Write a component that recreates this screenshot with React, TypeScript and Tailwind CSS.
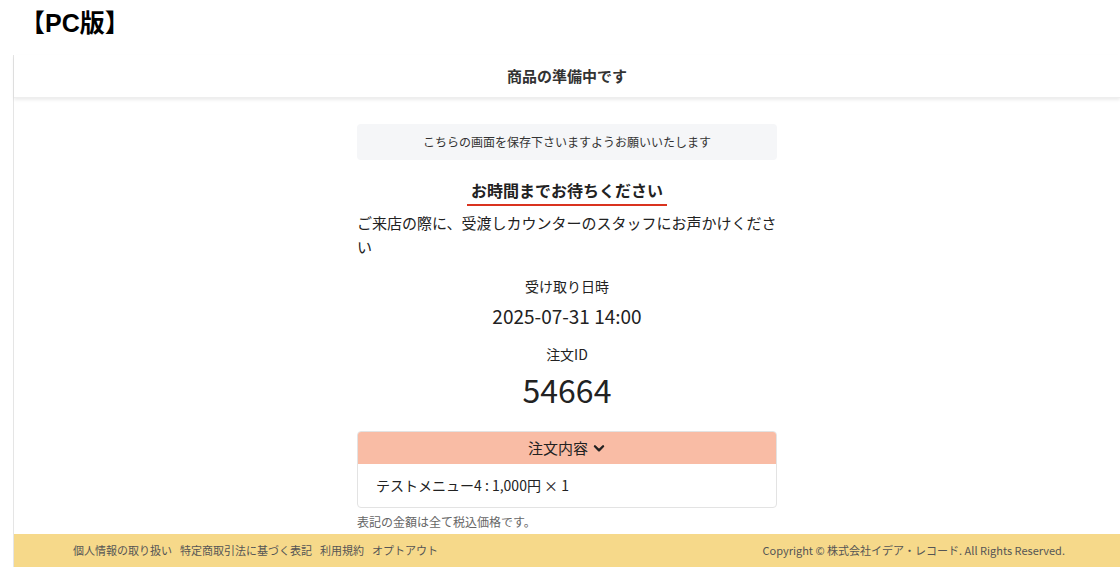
import React from "react";

const FONT = {
  fontFamily: "'Noto Sans CJK JP', 'Noto Sans', sans-serif",
};

export default function App() {
  return (
    <div className="w-[1120px] h-[567px] overflow-hidden bg-white" style={FONT}>
      <div className="h-[55px] pl-[20px] pt-[4px]">
        <h1 className="text-[25px] font-bold text-black leading-[38px]" style={{ fontFamily: "'Liberation Sans', 'Noto Sans CJK JP', sans-serif" }}>
          【PC版】
        </h1>
      </div>

      <div className="ml-[13px] h-[512px] flex flex-col border-l border-[#e5e5e5]">
        {/* ヘッダー */}
        <header className="h-[43px] shrink-0 flex items-center justify-center shadow-[0_2px_3px_rgba(0,0,0,0.08)] border-b border-[#eeeeee]">
          <span className="text-[15px] font-bold text-[#333]">商品の準備中です</span>
        </header>

        {/* コンテンツ */}
        <main className="flex-1 overflow-hidden">
          <div className="w-[420px] mx-auto pt-[26px] flex flex-col items-center text-[#222]">
            <div className="w-full h-[36px] bg-[#f5f6f8] rounded flex items-center justify-center text-[12px] text-[#333]">
              こちらの画面を保存下さいますようお願いいたします
            </div>
            <div className="mt-[18px] text-[16px] font-bold leading-[24px] pb-[2px] px-[4px] border-b-2 border-[#d9331f]">
              お時間までお待ちください
            </div>
            <p className="mt-[5px] text-[15px] leading-[24px]">ご来店の際に、受渡しカウンターのスタッフにお声かけください</p>
            <p className="mt-[16px] text-[14px] leading-[22px]">受け取り日時</p>
            <p className="mt-[5px] text-[19px] leading-[28px]">2025-07-31 14:00</p>
            <p className="mt-[13px] text-[14px] leading-[22px]">注文ID</p>
            <p className="mt-[4px] text-[32px] leading-[40px]">54664</p>

            <div className="mt-[22px] w-full rounded border border-[#e3e3e3] overflow-hidden">
              <div className="h-[32px] bg-[#f9bca5] flex items-center justify-center gap-1 text-[15px]">
                注文内容
                <svg width="14" height="14" viewBox="0 0 24 24" fill="none" stroke="#222" strokeWidth="4" strokeLinecap="round" strokeLinejoin="round">
                  <path d="M5 9l7 7 7-7" />
                </svg>
              </div>
              <div className="h-[43px] px-[18px] flex items-center text-[14px]">テストメニュー4 : 1,000円 × 1</div>
            </div>
            <p className="w-full mt-[5px] text-[12px] text-[#666]">表記の金額は全て税込価格です。</p>
            <div className="w-full mt-[14px] h-[20px] bg-[#d3eadb] rounded-t" />
          </div>
        </main>

        {/* フッター */}
        <footer className="h-[33px] shrink-0 bg-[#f6d98a] flex items-center justify-between pl-[59px] pr-[55px] text-[11px] text-[#555]">
          <div className="flex gap-[8px]">
            <span>個人情報の取り扱い</span>
            <span>特定商取引法に基づく表記</span>
            <span>利用規約</span>
            <span>オプトアウト</span>
          </div>
          <span>Copyright © 株式会社イデア・レコード. All Rights Reserved.</span>
        </footer>
      </div>
    </div>
  );
}
